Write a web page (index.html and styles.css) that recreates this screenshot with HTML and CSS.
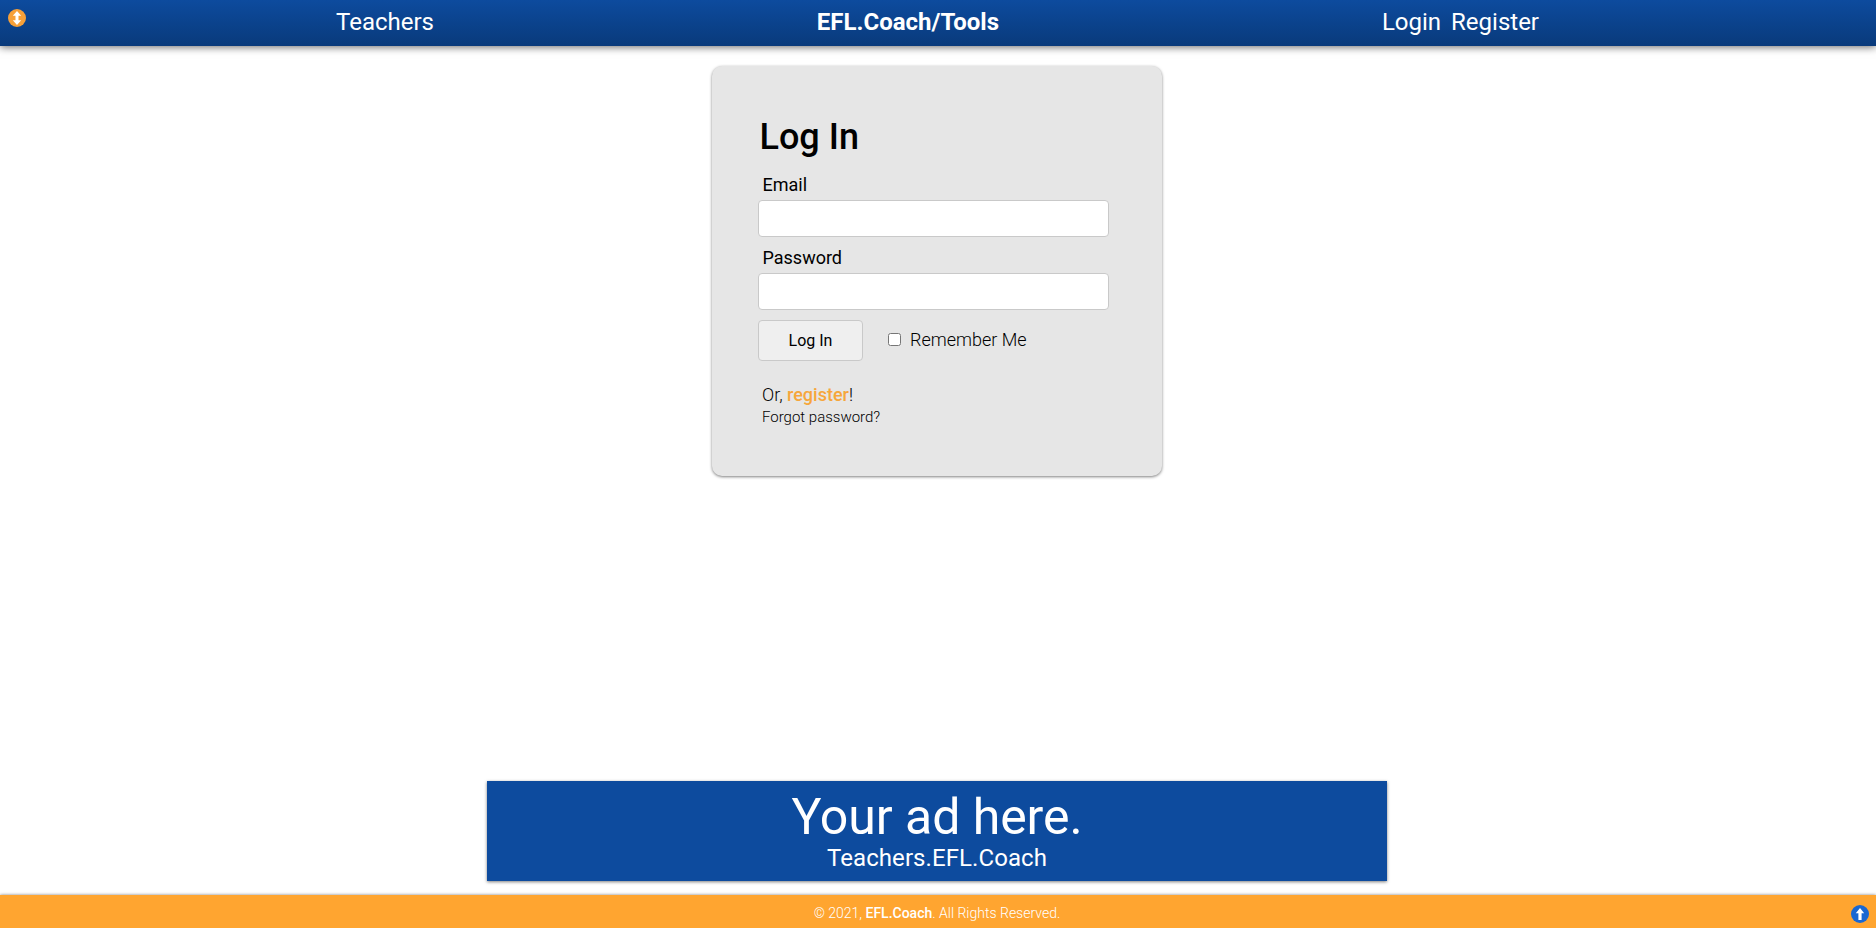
FILE: index.html
```html
<!DOCTYPE html>
<html lang="en">
<head>
<meta charset="utf-8">
<title>EFL.Coach/Tools</title>
<link rel="stylesheet" href="styles.css">
</head>
<body>
<header class="topbar">
  <svg class="toggle" viewBox="0 0 18 18" width="18" height="18"><circle cx="9" cy="9" r="9" fill="#f6a039"/><path d="M9 2 13.2 6.8H10.5V11.2H13.2L9 16 4.8 11.2H7.5V6.8H4.8Z" fill="#fff"/></svg>
  <a class="link">Teachers</a>
  <a class="brand">EFL.Coach/Tools</a>
  <nav class="account"><a class="link">Login</a><a class="link">Register</a></nav>
</header>
<main class="main">
  <form class="card">
    <h1 class="title">Log In</h1>
    <label class="label" for="email">Email</label>
    <input class="field" id="email" type="email">
    <label class="label" for="password">Password</label>
    <input class="field" id="password" type="password">
    <div class="actions">
      <button class="submit" type="button">Log In</button>
      <label class="remember"><input class="check" type="checkbox">Remember Me</label>
    </div>
    <p class="or">Or, <a class="register">register</a>!</p>
    <p class="forgot">Forgot password?</p>
  </form>
  <aside class="ad">
    <div class="ad-title">Your ad here.</div>
    <div class="ad-site">Teachers.EFL.Coach</div>
  </aside>
</main>
<footer class="footer">
  <p class="copyright">© 2021, <b class="owner">EFL.Coach</b>. All Rights Reserved.</p>
  <svg class="to-top" viewBox="0 0 18 18" width="18" height="18"><circle cx="9" cy="9" r="9" fill="#1967d2"/><path d="M9 3 13.2 8.2H10.6V15H7.4V8.2H4.8Z" fill="#fff"/></svg>
</footer>
</body>
</html>
```
FILE: styles.css
```css
* { box-sizing: border-box; }
body {
  margin: 0;
  height: 928px;
  display: flex;
  flex-direction: column;
  overflow: hidden;
  background: #fff;
  color: #000;
  font-family: Roboto, sans-serif;
  font-weight: 300;
}
.topbar {
  position: relative;
  z-index: 1;
  flex: none;
  height: 46px;
  padding: 0 337px 2px 336px;
  display: flex;
  align-items: center;
  justify-content: space-between;
  background: linear-gradient(#0d4b9e, #093a7b);
  box-shadow: 0 1px 8px rgba(0, 0, 0, .6);
  color: #fff;
  font-size: 24px;
  line-height: 44px;
}
.toggle { position: absolute; left: 8px; top: 9px; }
.link { font-weight: 400; }
.brand { font-weight: 700; }
.account { display: flex; gap: 10px; }
.main {
  flex: 1;
  padding: 20px 2px 14px 0;
  display: flex;
  flex-direction: column;
  align-items: center;
  justify-content: space-between;
}
.card {
  width: 450px;
  height: 410px;
  padding: 46px;
  border-radius: 10px;
  background: #e6e6e6;
  box-shadow: 0 1px 3px rgba(0, 0, 0, .5);
}
.title {
  margin: 0;
  padding-left: 1.5px;
  font-size: 36px;
  font-weight: 500;
  line-height: 50px;
}
.label {
  display: block;
  height: 38px;
  padding: 10px 0 0 4.5px;
  font-size: 18px;
  font-weight: 400;
  line-height: 25px;
}
.field {
  display: block;
  width: 351px;
  height: 37px;
  margin: 0 0 -2px;
  border: 1px solid #c9c9c9;
  border-radius: 4px;
  background: #fff;
}
.actions { display: flex; align-items: center; margin-top: 12px; }
.submit {
  width: 105px;
  height: 41px;
  padding: 0;
  border: 1px solid #c9c9c9;
  border-radius: 4px;
  background: #efefef;
  color: #000;
  font: 400 16px Roboto, sans-serif;
}
.remember {
  display: flex;
  align-items: center;
  margin: 0 0 2px 25px;
  font-size: 18px;
  line-height: 24px;
}
.check { width: 13px; height: 13px; margin: 0 9px 0 0; }
.or { margin: 22px 0 0 4px; font-size: 18px; line-height: 24px; }
.register { color: #f6a63c; font-weight: 500; }
.forgot { margin: 0 0 0 4px; font-size: 15px; line-height: 20px; }
.ad {
  width: 900px;
  height: 100px;
  padding-top: 7px;
  background: #0d4b9e;
  box-shadow: 0 1px 3px rgba(0, 0, 0, .5);
  color: #fff;
  font-weight: 400;
  text-align: center;
}
.ad-title { font-size: 50px; line-height: 59px; letter-spacing: -.05px; }
.ad-site { font-size: 24px; line-height: 22px; letter-spacing: .08px; }
.footer {
  position: relative;
  flex: none;
  height: 33px;
  padding: 3px 2px 0 0;
  background: #ffa530;
  box-shadow: 0 0 3px rgba(0, 0, 0, .5);
  color: #fff;
  text-align: center;
}
.copyright { margin: 0; font-size: 14px; line-height: 31px; }
.owner { font-weight: 500; }
.to-top { position: absolute; right: 7px; top: 10px; }
```
